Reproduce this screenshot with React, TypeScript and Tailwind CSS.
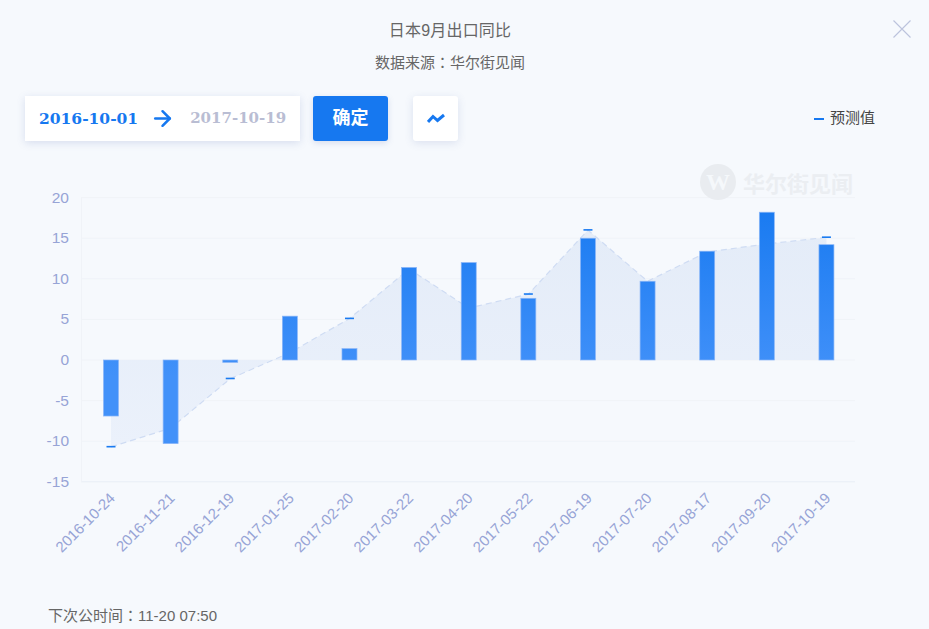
import { ArrowRight } from 'lucide-react'

const sans = '"Liberation Sans", "Noto Sans CJK SC", sans-serif'

const dates = [
  '2016-10-24',
  '2016-11-21',
  '2016-12-19',
  '2017-01-25',
  '2017-02-20',
  '2017-03-22',
  '2017-04-20',
  '2017-05-22',
  '2017-06-19',
  '2017-07-20',
  '2017-08-17',
  '2017-09-20',
  '2017-10-19',
]
const actual = [-6.9, -10.3, -0.3, 5.4, 1.4, 11.4, 12, 7.6, 15, 9.7, 13.4, 18.2, 14.2]
const forecast = [-10.7, -8.4, -2.3, 0.9, 5.1, 11.2, 6.4, 8.1, 16, 9.7, 13.3, 14.3, 15.1]
const forecastMarks = [0, 2, 4, 7, 8, 12]
const ticks = [20, 15, 10, 5, 0, -5, -10, -15]

// svg is placed at y=160 in the page
const top = 160
const yOf = (v: number) => 360 - top - v * 8.12
const xOf = (i: number) => 111 + i * 59.62

const linePoints = forecast.map((v, i) => `${xOf(i)},${yOf(v)}`).join(' ')
const areaPoints = `${xOf(0)},${yOf(0)} ${linePoints} ${xOf(12)},${yOf(0)}`

function Chart() {
  return (
    <svg width="929" height="420" className="block" style={{ fontFamily: sans }}>
      <defs>
        <linearGradient id="bar" gradientUnits="userSpaceOnUse" x1="0" y1={yOf(18.2)} x2="0" y2={yOf(-2)}>
          <stop offset="0%" stopColor="#1a7bf1" />
          <stop offset="100%" stopColor="#4291f9" />
        </linearGradient>
        <linearGradient id="area" x1="0" y1="0" x2="0" y2="1">
          <stop offset="0%" stopColor="#e4ecf8" />
          <stop offset="100%" stopColor="#ebf1fb" />
        </linearGradient>
      </defs>

      {ticks.map((t) => (
        <g key={t}>
          <line x1="81" x2="855" y1={yOf(t)} y2={yOf(t)} stroke={t === -15 ? '#e9eef6' : '#f0f3f8'} />
          <text x="69" y={yOf(t) + 5} textAnchor="end" fontSize="15.5" fill="#97a4d6">
            {t}
          </text>
        </g>
      ))}
      <line x1="81.5" x2="81.5" y1={yOf(20)} y2={yOf(-15)} stroke="#f0f3f8" />

      <polygon points={areaPoints} fill="url(#area)" />
      <polyline points={linePoints} fill="none" stroke="#cfdcf3" strokeWidth="1.2" strokeDasharray="6 4" />

      {actual.map((v, i) => (
        <rect
          key={dates[i]}
          x={xOf(i) - 7.5}
          y={Math.min(yOf(v), yOf(0))}
          width="15"
          height={Math.abs(v) * 8.12}
          fill="url(#bar)"
          stroke="#8ab6f8"
          strokeWidth="0.7"
        />
      ))}

      {forecastMarks.map((i) => (
        <rect key={i} x={xOf(i) - 4.5} y={yOf(forecast[i]) - 1} width="9" height="1.6" fill="#1a7bf1" />
      ))}

      {dates.map((d, i) => (
        <text
          key={d}
          textAnchor="end"
          fontSize="15"
          fill="#97a4d6"
          transform={`translate(${xOf(i) + 5} ${499 - top}) rotate(-45)`}
        >
          {d}
        </text>
      ))}
    </svg>
  )
}

function Colon() {
  return <span style={{ fontFamily: '"Noto Sans CJK TC", sans-serif' }}>：</span>
}

export default function App() {
  return (
    <div
      className="relative flex h-[629px] w-[929px] flex-col overflow-hidden bg-[#f6f9fd]"
      style={{ fontFamily: sans }}
    >
      <button type="button" className="absolute right-[18px] top-[20px] text-[#bcc3dc]">
        <svg width="18" height="18" viewBox="0 0 18 18" className="block">
          <path d="M0.5 0.5 L17.5 17.5 M17.5 0.5 L0.5 17.5" stroke="currentColor" strokeWidth="1.1" fill="none" />
        </svg>
      </button>

      <div className="flex flex-col items-center pr-[29px] pt-[20px] text-[#666]">
        <h1 className="text-[16px] leading-[22px] tracking-[0.2px]">日本9月出口同比</h1>
        <p className="mt-[9px] h-[22px] text-[15px] leading-[22px]">
          数据来源
          <Colon />
          华尔街见闻
        </p>
      </div>

      <div className="mt-[23px] flex h-[45px] items-center pl-[25px] pr-[54px]">
        <div
          className="flex h-full w-[275px] items-center bg-white pl-[14px] font-bold shadow-[0_2px_8px_rgba(80,100,170,0.18)]"
          style={{ fontFamily: '"DejaVu Serif", serif' }}
        >
          <span className="text-[15.5px] text-[#1678f0]">2016-10-01</span>
          <ArrowRight size={25} strokeWidth={2.4} className="ml-[12px] text-[#1678f0]" />
          <span className="ml-[15px] text-[15px] text-[#b9bdd3]">2017-10-19</span>
        </div>
        <button
          type="button"
          className="ml-[13px] h-full w-[75px] rounded-[3px] bg-[#1678f0] text-[18px] font-bold text-white shadow-[0_2px_6px_rgba(80,100,170,0.18)]"
        >
          确定
        </button>
        <button
          type="button"
          className="ml-[25px] flex h-full w-[45px] items-center justify-center rounded-[3px] bg-white shadow-[0_2px_8px_rgba(80,100,170,0.16)]"
        >
          <svg width="18" height="11" viewBox="0 0 18 11">
            <path d="M1 9 L6 3.5 L10.5 7.5 L17 2" stroke="#1678f0" strokeWidth="3" fill="none" />
          </svg>
        </button>
        <div className="ml-auto flex items-center text-[15px] text-[#444]">
          <span className="mr-[6px] h-[2px] w-[10px] bg-[#1678f0]" />
          预测值
        </div>
      </div>

      <div className="relative mt-[19px]">
        <div className="absolute left-[700px] top-[4px] flex items-center gap-[7px] text-[#ebeef2]">
          <div
            className="flex h-[36px] w-[36px] items-center justify-center rounded-full bg-[#e9ecf0] text-[24px] font-bold text-[#f5f8fb]"
            style={{ fontFamily: '"Liberation Serif", serif' }}
          >
            W
          </div>
          <span className="text-[22px] font-bold" style={{ fontFamily: '"Noto Sans CJK SC", sans-serif' }}>
            华尔街见闻
          </span>
        </div>
        <Chart />
      </div>

      <p className="absolute bottom-[2px] left-[48px] text-[15px] leading-[22px] text-[#666]">
        下次公时间
        <Colon />
        11-20 07:50
      </p>
    </div>
  )
}
